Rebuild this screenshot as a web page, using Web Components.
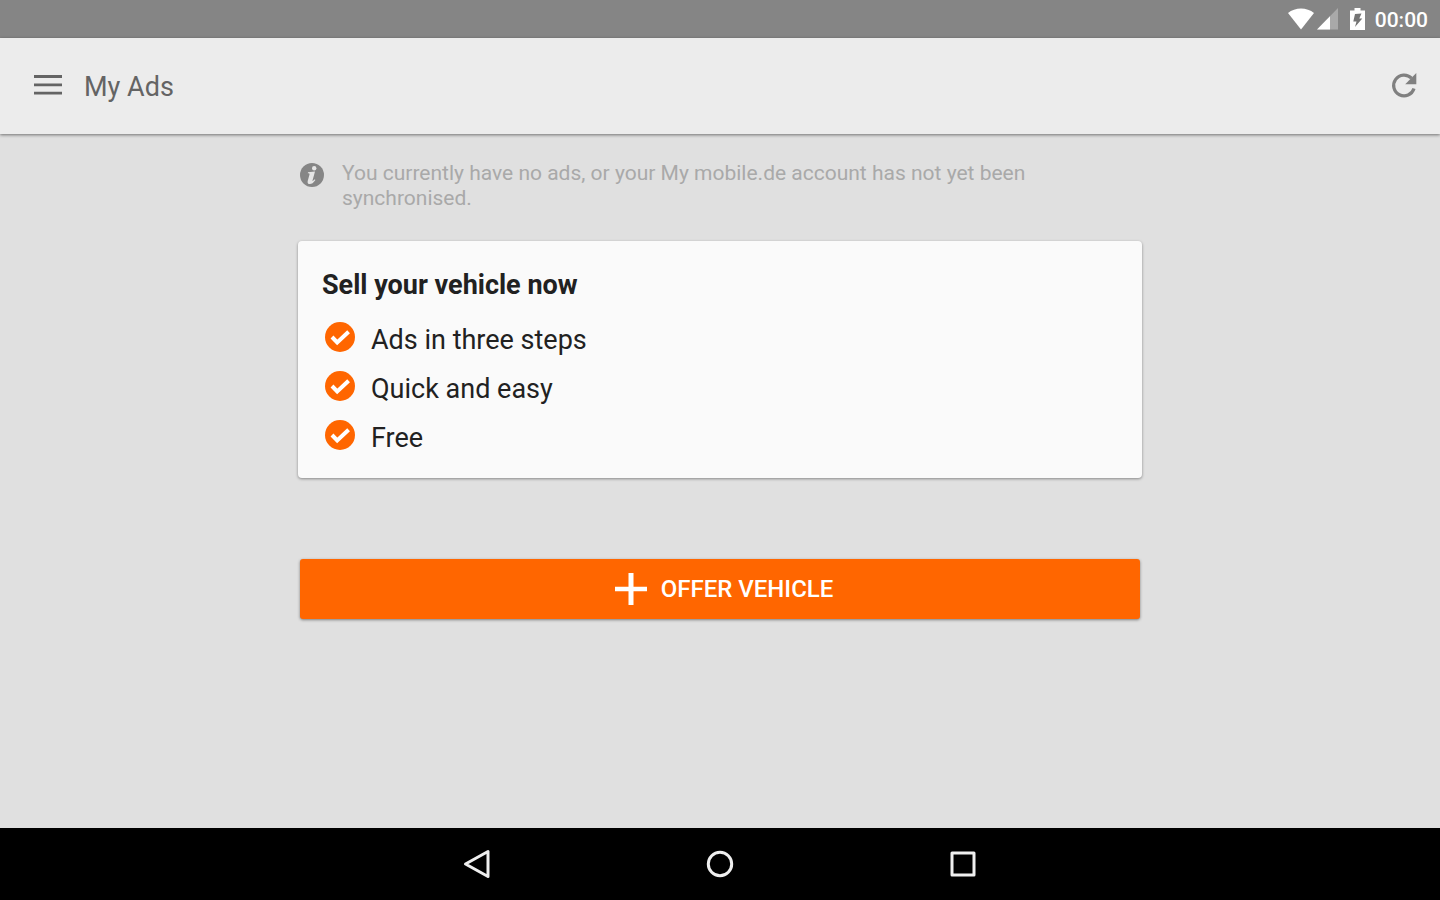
<!DOCTYPE html>
<html lang="en">
<head>
<meta charset="utf-8">
<meta name="viewport" content="width=device-width, initial-scale=1">
<title>My Ads</title>
<style>
    html {
        height: 100%;
    }

    body {
        margin: 0;
        min-height: 100%;
        display: grid;
        font-family: Roboto, "Noto Sans", sans-serif;
        --accent: #ff6600;
        --surface: #fafafa;
        --background: #e0e0e0;
    }
</style>
</head>
<body>
    <ads-screen>
        <status-bar slot="status" time="00:00"></status-bar>
        <app-bar slot="header">My Ads</app-bar>
        <info-note>You currently have no ads, or your My mobile.de account has not yet been synchronised.</info-note>
        <promo-card>
            <span slot="title">Sell your vehicle now</span>
            <check-item>Ads in three steps</check-item>
            <check-item>Quick and easy</check-item>
            <check-item>Free</check-item>
        </promo-card>
        <offer-button>OFFER VEHICLE</offer-button>
        <nav-bar slot="footer"></nav-bar>
    </ads-screen>

<script>
class AdsScreen extends HTMLElement {
    constructor() {
        super();

        this.attachShadow({mode: 'open'});
        this.shadowRoot.innerHTML = `
            <style>
                :host {
                    display: flex;
                    flex-direction: column;
                    min-height: 100vh;
                    background: var(--background);
                }

                main {
                    flex: 1;
                    box-sizing: border-box;
                    width: 100%;
                    max-width: 844px;
                    margin: 0 auto;
                    padding: 27px 0;
                }
            </style>

            <slot name="status"></slot>
            <slot name="header"></slot>
            <main><slot></slot></main>
            <slot name="footer"></slot>
        `;
    }
}

class StatusBar extends HTMLElement {
    constructor() {
        super();

        this.attachShadow({mode: 'open'});
        this.shadowRoot.innerHTML = `
            <style>
                :host {
                    display: flex;
                    justify-content: flex-end;
                    align-items: center;
                    height: 38px;
                    padding-right: 12px;
                    background: #858585;
                    color: #fff;
                    font-size: 21px;
                    font-weight: 500;
                }

                svg {
                    display: block;
                    fill: currentColor;
                }

                .signal {
                    margin: 0 12px 0 3px;
                }

                time {
                    margin-left: 10px;
                    padding-top: 2px;
                }
            </style>

            <svg width="26" height="22" viewBox="0 0 26 22" aria-hidden="true">
                <path d="M0 5C7-1 19-1 26 5L13 21.500z"/>
            </svg>
            <svg class="signal" width="21" height="22" viewBox="0 0 21 22" aria-hidden="true">
                <path opacity=".3" d="M21 0V21.500H0z"/>
                <path d="M13 8.200V21.500H0z"/>
            </svg>
            <svg width="15" height="22" viewBox="0 0 15 22" aria-hidden="true">
                <path d="M4.500 0H10.500V2.500H15V22H0V2.500H4.500z"/>
                <path fill="#757575" d="M5 6L11.500 5.500L9.300 10.500H12.300L5 19L6.500 13.500H3.300z"/>
            </svg>
            <time></time>
        `;
    }

    connectedCallback() {
        this.shadowRoot.querySelector('time').textContent = this.getAttribute('time');
    }
}

class AppBar extends HTMLElement {
    constructor() {
        super();

        this.attachShadow({mode: 'open'});
        this.shadowRoot.innerHTML = `
            <style>
                :host {
                    display: block;
                    position: relative;
                    background: #ececec;
                    box-shadow: 0 1px 3px rgba(0,0,0,0.5);
                }

                header {
                    display: flex;
                    align-items: center;
                    height: 96px;
                    padding: 0 16px 0 24px;
                    color: #646464;
                }

                h1 {
                    flex: 1;
                    margin: 0 0 0 12px;
                    padding-top: 2px;
                    font-size: 27px;
                    line-height: 32px;
                    font-weight: 400;
                }

                button {
                    width: 48px;
                    height: 48px;
                    padding: 0 0 2px;
                    border: 0;
                    background: none;
                    color: #646464;
                    cursor: pointer;
                }

                #refresh-btn {
                    width: 40px;
                    color: #808080;
                }

                svg {
                    display: block;
                    margin: 0 auto;
                }
            </style>

            <header>
                <button id="menu-btn" aria-label="Menu">
                    <svg width="28" height="20" viewBox="0 0 28 20" fill="currentColor">
                        <path d="M0 0H28V3H0zM0 8.500H28V11.300H0zM0 16.800H28V19.600H0z"/>
                    </svg>
                </button>
                <h1><slot></slot></h1>
                <button id="refresh-btn" aria-label="Refresh">
                    <svg width="36" height="36" viewBox="0 0 36 36">
                        <path d="M25.500 11.200A10.400 10.400 0 1 0 28 21.500" fill="none" stroke="currentColor" stroke-width="3.200"/>
                        <path d="M30.300 6V17.200H19.200z" fill="currentColor"/>
                    </svg>
                </button>
            </header>
        `;
    }
}

class InfoNote extends HTMLElement {
    constructor() {
        super();

        this.attachShadow({mode: 'open'});
        this.shadowRoot.innerHTML = `
            <style>
                :host {
                    display: flex;
                    align-items: flex-start;
                    gap: 18px;
                    padding-left: 2px;
                    color: #a9a9a9;
                    font-size: 21px;
                    line-height: 25px;
                }

                svg {
                    flex: none;
                    margin-top: 2px;
                }

                p {
                    margin: 0;
                }
            </style>

            <svg width="24" height="24" viewBox="0 0 24 24" aria-hidden="true">
                <circle cx="12" cy="12" r="12" fill="#868686"/>
                <circle cx="14.200" cy="5.200" r="2.200" fill="#e6e6e6"/>
                <path fill="#e6e6e6" d="M8 9.300L15 8.600L12.500 17.400C12.200 18.400 13 18.200 14.700 16.300L15.400 16.900C13.500 19.800 11.600 21 9.800 21C8 21 7.200 19.800 7.700 17.900L9.500 11.600C9.700 10.700 9.400 10.300 7.800 10.300z"/>
            </svg>
            <p><slot></slot></p>
        `;
    }
}

class PromoCard extends HTMLElement {
    constructor() {
        super();

        this.attachShadow({mode: 'open'});
        this.shadowRoot.innerHTML = `
            <style>
                :host {
                    display: block;
                    margin-top: 30px;
                    padding: 28px 24px 16px;
                    border-radius: 4px;
                    background: var(--surface);
                    box-shadow: 0 1px 3px rgba(0,0,0,0.4);
                    color: #212121;
                }

                h2 {
                    margin: 0 0 14px;
                    font-size: 27px;
                    line-height: 32px;
                    font-weight: 700;
                }
            </style>

            <h2><slot name="title"></slot></h2>
            <div role="list"><slot></slot></div>
        `;
    }
}

class CheckItem extends HTMLElement {
    constructor() {
        super();

        this.attachShadow({mode: 'open'});
        this.shadowRoot.innerHTML = `
            <style>
                :host {
                    display: flex;
                    align-items: center;
                    gap: 16px;
                    height: 49px;
                    padding-left: 3px;
                    font-size: 27px;
                    line-height: 32px;
                }

                svg {
                    margin-bottom: 5px;
                }
            </style>

            <svg width="30" height="30" viewBox="0 0 30 30" aria-hidden="true">
                <circle cx="15" cy="15" r="15" fill="var(--accent)"/>
                <path d="M7 15L12.200 20.400L23.600 9.800" fill="none" stroke="#fff" stroke-width="4"/>
            </svg>
            <span><slot></slot></span>
        `;
    }

    connectedCallback() {
        this.setAttribute('role', 'listitem');
    }
}

class OfferButton extends HTMLElement {
    constructor() {
        super();

        this.attachShadow({mode: 'open'});
        this.shadowRoot.innerHTML = `
            <style>
                :host {
                    display: block;
                    margin: 81px 2px 0;
                }

                button {
                    display: flex;
                    justify-content: center;
                    align-items: center;
                    gap: 14px;
                    width: 100%;
                    height: 60px;
                    padding: 0 0 0 8px;
                    border: 0;
                    border-radius: 3px;
                    background: var(--accent);
                    box-shadow: 0 1px 3px rgba(0,0,0,0.45);
                    color: #fff;
                    font: inherit;
                    font-size: 24px;
                    font-weight: 500;
                    cursor: pointer;
                }
            </style>

            <button>
                <svg width="32" height="32" viewBox="0 0 32 32" fill="currentColor" aria-hidden="true">
                    <path d="M13.500 0H18.500V13.800H32V18.200H18.500V32H13.500V18.200H0V13.800H13.500z"/>
                </svg>
                <span><slot></slot></span>
            </button>
        `;
    }
}

class NavBar extends HTMLElement {
    constructor() {
        super();

        this.attachShadow({mode: 'open'});
        this.shadowRoot.innerHTML = `
            <style>
                :host {
                    display: block;
                    background: #000;
                }

                nav {
                    display: flex;
                    justify-content: center;
                    gap: 99px;
                    height: 72px;
                }

                button {
                    width: 144px;
                    padding: 0;
                    border: 0;
                    background: none;
                    color: #efefef;
                    cursor: pointer;
                }

                svg {
                    display: block;
                    margin: 0 auto;
                    fill: none;
                    stroke: currentColor;
                    stroke-width: 3;
                    stroke-linejoin: round;
                }
            </style>

            <nav>
                <button aria-label="Back">
                    <svg width="30" height="30" viewBox="0 0 30 30"><path d="M3.500 15L26 2.500V27.500z"/></svg>
                </button>
                <button aria-label="Home">
                    <svg width="30" height="30" viewBox="0 0 30 30"><circle cx="15" cy="15" r="11.700"/></svg>
                </button>
                <button aria-label="Recent apps">
                    <svg width="30" height="30" viewBox="0 0 30 30"><path d="M4 4H26V26H4z"/></svg>
                </button>
            </nav>
        `;
    }
}

customElements.define('ads-screen', AdsScreen);
customElements.define('status-bar', StatusBar);
customElements.define('app-bar', AppBar);
customElements.define('info-note', InfoNote);
customElements.define('promo-card', PromoCard);
customElements.define('check-item', CheckItem);
customElements.define('offer-button', OfferButton);
customElements.define('nav-bar', NavBar);
</script>
</body>
</html>
